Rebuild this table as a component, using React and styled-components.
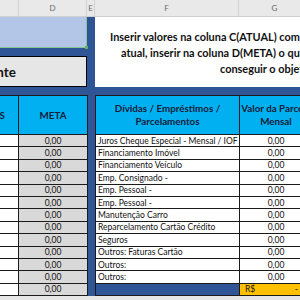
import styled, { createGlobalStyle } from 'styled-components'

const GlobalStyle = createGlobalStyle`
  html, body { margin: 0; padding: 0; }
  body { background: #e6e6e6; }
`

const COLS = '19px 68px 8px 144px 72px'

const Page = styled.div`
  width: 300px;
  height: 300px;
  overflow: hidden;
  background: #e6e6e6;
  font-family: Lato, "Open Sans", sans-serif;
  color: #111;
`

const ColumnBar = styled.div`
  display: grid;
  grid-template-columns: ${COLS};
  height: 16px;
  background: #e9e9e9;
  border-bottom: 1px solid #cfcfcf;
`

const ColLabel = styled.div`
  display: flex;
  align-items: center;
  justify-content: center;
  border-right: 1px solid #d2d2d2;
  font-size: 8px;
  color: #6a6a6a;
`

const Frame = styled.div`
  width: 311px;
  background: #2f5597;
`

const Top = styled.div`
  display: grid;
  grid-template-columns: 87px 8px 216px;
  height: 70px;
`

const LeftStack = styled.div`
  display: flex;
  flex-direction: column;
  justify-content: space-between;
`

const SelectedCell = styled.div`
  position: relative;
  height: 30px;
  background: #b4c6e7;
  border-right: 1px solid #86c595;
  border-bottom: 1px solid #86c595;

  &::after {
    content: '';
    position: absolute;
    right: -2px;
    bottom: -2px;
    width: 3px;
    height: 3px;
    background: #5fae72;
  }
`

const TitleBox = styled.div`
  display: flex;
  align-items: center;
  justify-content: flex-end;
  height: 29px;
  padding-right: 70px;
  background: #e7e6e6;
  border: 1px solid #000;
  border-left: none;
  overflow: hidden;
  white-space: nowrap;
  font-size: 13.5px;
  font-weight: 700;
`

const Notice = styled.div`
  grid-column: 3;
  background: #fff;
  padding-top: 12px;
  font-size: 10.9px;
  font-weight: 700;
  line-height: 16px;
  white-space: nowrap;
  overflow: hidden;
`

const NoticeLine = styled.div`
  padding-left: ${(p) => p.$indent}px;
`

const Tables = styled.div`
  display: flex;
  gap: 7px;
  padding-top: 8px;
`

const Table = styled.div`
  display: grid;
  grid-template-columns: ${(p) => p.$cols};
  grid-template-rows: 38px repeat(13, 11.4px);
  gap: 1px;
  background: #1b1b1b;
  border: 1px solid #1b1b1b;
  border-left: ${(p) => (p.$open ? 'none' : '1px solid #1b1b1b')};
`

const Head = styled.div`
  display: flex;
  align-items: center;
  justify-content: ${(p) => (p.$end ? 'flex-end' : 'center')};
  padding-right: ${(p) => (p.$end ? '13px' : '0')};
  overflow: hidden;
  white-space: nowrap;
  background: #00b0f0;
  text-align: center;
  font-size: 9.8px;
  font-weight: 700;
  line-height: 13px;
  color: #14203a;
`

const Cell = styled.div`
  display: flex;
  align-items: center;
  justify-content: ${(p) => (p.$left ? 'flex-start' : 'center')};
  padding-left: ${(p) => (p.$left ? '2px' : '0')};
  background: ${(p) => p.$bg || '#fff'};
  white-space: nowrap;
  overflow: hidden;
  font-size: 8.5px;
`

const Total = styled(Cell)`
  justify-content: space-between;
  padding: 0 14px 0 5px;
  background: #ffc000;
`

const debts = [
  'Juros Cheque Especial - Mensal / IOF',
  'Financiamento Imóvel',
  'Financiamento Veículo',
  'Emp. Consignado -',
  'Emp. Pessoal -',
  'Emp. Pessoal -',
  'Manutenção Carro',
  'Reparcelamento Cartão Crédito',
  'Seguros',
  'Outros: Faturas Cartão',
  'Outros:',
  'Outros:',
]

const goals = Array.from({ length: 13 }, (_, i) => i)

function App() {
  return (
    <Page>
      <GlobalStyle />
      <ColumnBar>
        <ColLabel />
        <ColLabel>D</ColLabel>
        <ColLabel>E</ColLabel>
        <ColLabel>F</ColLabel>
        <ColLabel>G</ColLabel>
      </ColumnBar>
      <Frame>
        <Top>
          <LeftStack>
            <SelectedCell />
            <TitleBox>Orçamento Mensal Recorrente</TitleBox>
          </LeftStack>
          <Notice>
            <NoticeLine $indent={15}>Inserir valores na coluna C(ATUAL) com os valores</NoticeLine>
            <NoticeLine $indent={26}>atual, inserir na coluna D(META) o quanto deseja</NoticeLine>
            <NoticeLine $indent={125}>conseguir o objetivo.</NoticeLine>
          </Notice>
        </Top>
        <Tables>
          <Table $cols="18px 68px" $open>
            <Head $end>VALORES ATUAIS</Head>
            <Head>META</Head>
            {goals.map((i) => [
              <Cell key={'c' + i} />,
              <Cell key={'d' + i} $bg="#d9d9d9">0,00</Cell>,
            ])}
          </Table>
          <Table $cols="143px 72px">
            <Head>Dívidas / Empréstimos /<br />Parcelamentos</Head>
            <Head>Valor da Parcela<br />Mensal</Head>
            {debts.map((d, i) => [
              <Cell key={'f' + i} $left>{d}</Cell>,
              <Cell key={'g' + i}>0,00</Cell>,
            ])}
            <Cell $bg="#2f5597" />
            <Total><span>R$</span><span>-</span></Total>
          </Table>
        </Tables>
      </Frame>
    </Page>
  )
}

export default App
